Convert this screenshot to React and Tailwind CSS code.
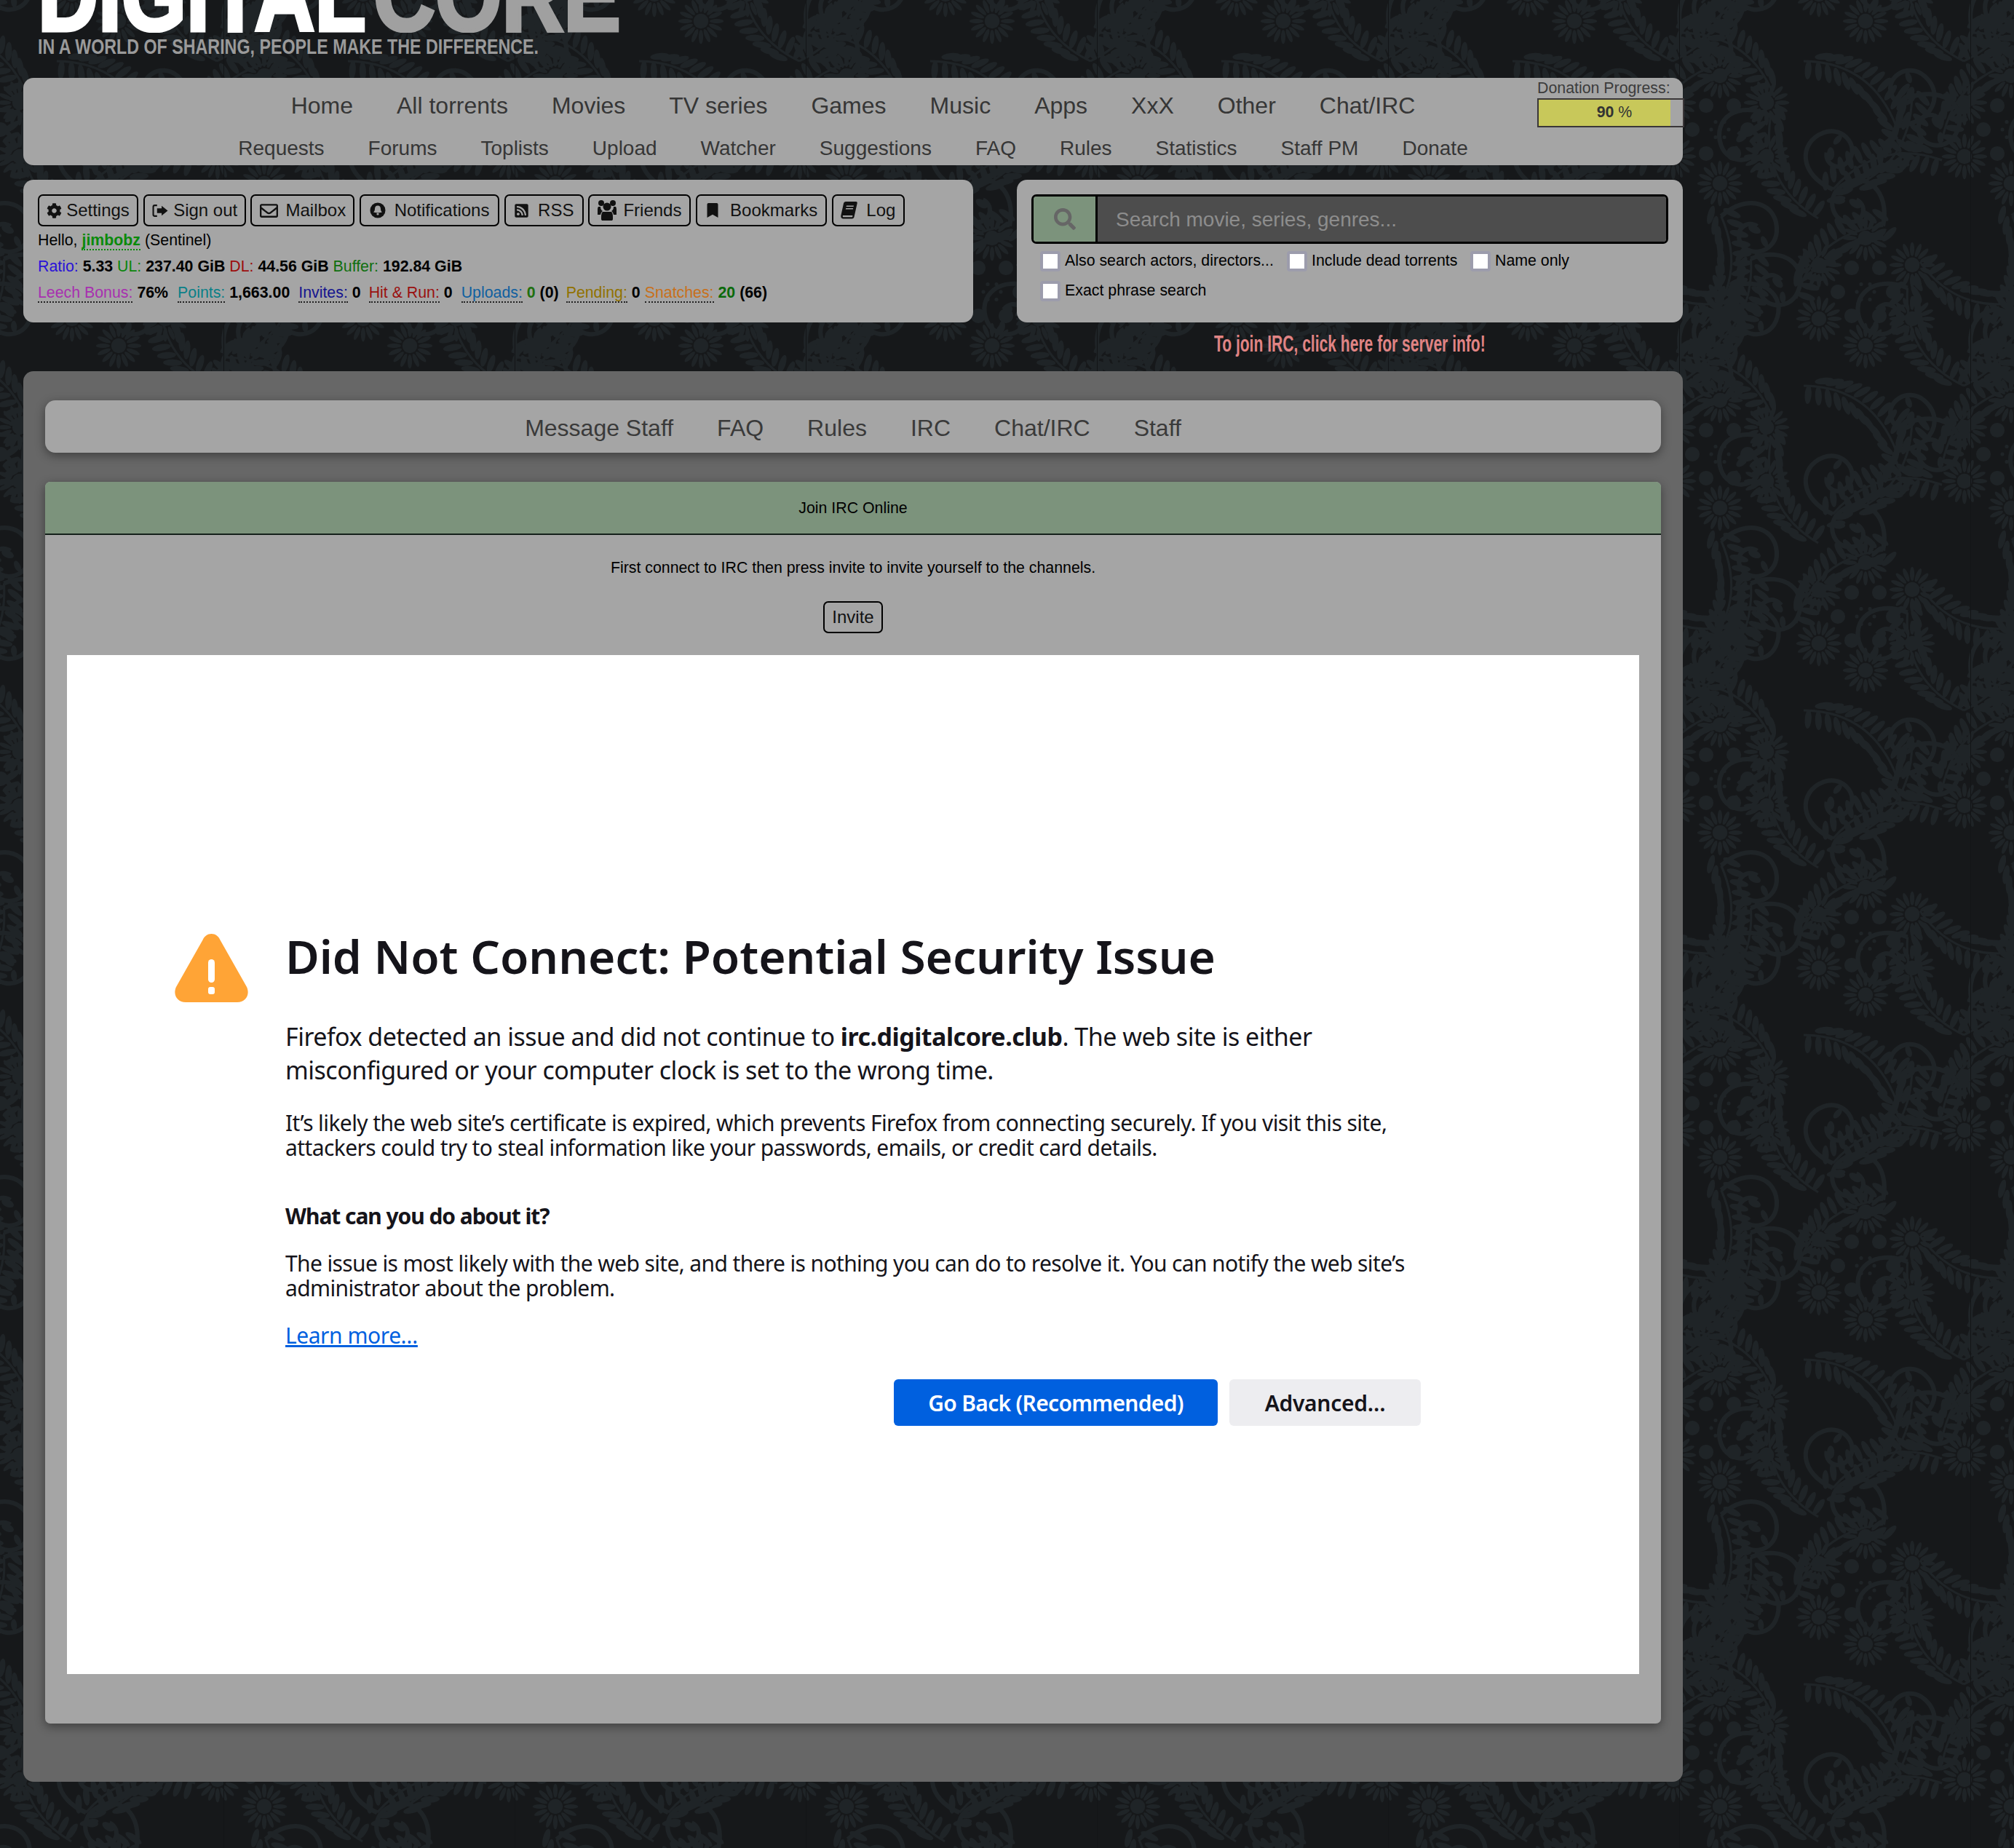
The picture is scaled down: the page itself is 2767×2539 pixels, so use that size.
import React from 'react';
import { FaCog, FaRegEnvelope, FaRssSquare, FaBookmark, FaSearch } from 'react-icons/fa';

const SANS = 'font-["Liberation_Sans",Arial,sans-serif]';

// damask background pieces
const range = (n) => Array.from({ length: n }, (_, i) => i);

const Leaf = ({ x, y, a, l = 16, w = 6 }) => (
  <ellipse cx={x} cy={y} rx={l} ry={w} transform={`rotate(${a} ${x} ${y})`} />
);

const Flower = ({ x, y, r = 30 }) => (
  <g>
    {range(16).map((i) => {
      const a = i * 22.5;
      const rad = (a * Math.PI) / 180;
      return <Leaf key={i} x={x + Math.cos(rad) * r * 0.72} y={y + Math.sin(rad) * r * 0.72} a={a} l={r * 0.32} w={r * 0.1} />;
    })}
    <circle cx={x} cy={y} r={r * 0.34} />
  </g>
);

const Cluster = ({ x, y }) => (
  <g>
    {range(6).map((i) => {
      const rad = ((i * 60 + 30) * Math.PI) / 180;
      return <Flower key={i} x={x + Math.cos(rad) * 74} y={y + Math.sin(rad) * 74} />;
    })}
    {range(6).map((i) => {
      const rad = ((i * 60) * Math.PI) / 180;
      return <circle key={i} cx={x + Math.cos(rad) * 38} cy={y + Math.sin(rad) * 38} r="10" />;
    })}
    {range(6).map((i) => {
      const rad = ((i * 60) * Math.PI) / 180;
      return <circle key={i} cx={x + Math.cos(rad) * 12} cy={y + Math.sin(rad) * 12} r="2.500" />;
    })}
  </g>
);

const Feather = ({ x, y, rot = 0, flip = 1 }) => {
  const pts = range(13).map((i) => {
    const t = i / 12;
    const px = 2 * (1 - t) * t * 70 + t * t * 40;
    const py = -2 * (1 - t) * t * 60 - t * t * 150;
    return [px, py, -90 + t * 70];
  });
  return (
    <g transform={`translate(${x} ${y}) rotate(${rot}) scale(${flip} 1)`}>
      <path d="M0 0Q70 -60 40 -150" fill="none" stroke="#1f2427" strokeWidth="3" />
      {pts.slice(1).map(([px, py, a], i) => (
        <g key={i}>
          <Leaf x={px - 14} y={py - 3} a={a - 50} l={13} w={4.500} />
          <Leaf x={px + 15} y={py - 3} a={a + 50} l={13} w={4.500} />
        </g>
      ))}
      <path d="M40 -150c40 -30 80 -10 74 28c-5 30 -46 34 -52 6c-3 -16 14 -26 26 -16" fill="none" stroke="#1f2427" strokeWidth="6" />
      <Leaf x={84} y={-128} a={30} l={9} w={5} />
      <Leaf x={96} y={-110} a={70} l={8} w={4} />
    </g>
  );
};

const TileBody = () => (
  <g>
    <Cluster x={55} y={68} />
    <Cluster x={255} y={291} />
    <Feather x={190} y={190} rot={-10} flip={-1} />
    <Feather x={230} y={150} rot={20} />
    <Feather x={160} y={300} rot={65} flip={-1} />
    <Feather x={30} y={340} rot={-5} />
    <Feather x={390} y={420} rot={-15} flip={-1} />
    <Feather x={420} y={380} rot={15} />
    <Feather x={360} y={530} rot={60} flip={-1} />
    <Feather x={-10} y={420} rot={15} />
    <Feather x={360} y={110} rot={-120} />
    <Feather x={170} y={420} rot={140} flip={-1} />
    <Feather x={330} y={250} rot={95} />
    <Feather x={130} y={470} rot={-70} />
  </g>
);

// tile content is drawn again on every side so that it wraps over the edges
const Tile = () => (
  <g fill="#1f2427">
    {[-400, 0, 400].map((dx) =>
      [-446, 0, 446].map((dy) => (
        <g key={`${dx}:${dy}`} transform={`translate(${dx} ${dy})`}>
          <TileBody />
        </g>
      ))
    )}
  </g>
);

const Background = () => (
  <svg className="absolute inset-0 w-full h-full" aria-hidden="true">
    <defs>
      <pattern id="damask" width="400" height="446" patternUnits="userSpaceOnUse" patternTransform="translate(308 110)">
        <Tile />
        <rect x="399" width="1" height="446" fill="#131517" />
      </pattern>
    </defs>
    <rect width="100%" height="100%" fill="url(#damask)" />
  </svg>
);

const SignOutIcon = () => (
  <svg width="24" height="21" viewBox="0 0 22 20" fill="currentColor">
    <path d="M7 2H4a3 3 0 0 0-3 3v10a3 3 0 0 0 3 3h3v-2H4a1 1 0 0 1-1-1V5a1 1 0 0 1 1-1h3z" />
    <path d="M13 3.500 21 10l-8 6.500V13H7V7h6z" />
  </svg>
);

const BellIcon = () => (
  <svg width="22" height="22" viewBox="0 0 22 22">
    <circle cx="11" cy="11" r="10.500" fill="currentColor" />
    <path d="M11 4.500c-2.800 0-4 2-4 4.500 0 2-.8 3.500-2 4.500 2 1 10 1 12 0-1.200-1-2-2.500-2-4.500 0-2.500-1.200-4.500-4-4.500z" fill="#a5a5a5" />
    <circle cx="11" cy="16" r="1.600" fill="#a5a5a5" />
  </svg>
);

const FriendsIcon = () => (
  <svg width="26" height="30" viewBox="0 0 26 30" fill="currentColor">
    <circle cx="5" cy="5" r="4" />
    <circle cx="21" cy="5" r="4" />
    <circle cx="13" cy="10" r="5.500" />
    <path d="M1 10h3c0 3 1 5 3 6-1.500 1-2.500 2.500-3 5H0v-7c0-2 .3-3 1-4zM25 10h-3c0 3-1 5-3 6 1.500 1 2.500 2.500 3 5h4v-7c0-2-.3-3-1-4z" />
    <path d="M7 17h12c1.500 1.500 2 4 2 7v3c0 1.500-1 2-2 2H7c-1 0-2-.5-2-2v-3c0-3 .5-5.500 2-7z" />
  </svg>
);

const BookIcon = () => (
  <svg width="23" height="26" viewBox="0 0 23 26" fill="currentColor">
    <path d="M7 1h14c1.500 0 2 1 1.700 2.200L18.500 22c-.3 1.500-1.200 2.500-3 2.500H3.500C1.500 24.500 0 23 .3 20.500L4 3.500C4.300 2 5.500 1 7 1z" />
    <path d="M3 20h13.500l-.5 2.200H3.500c-.8 0-.9-1.700-.5-2.200z" fill="#a5a5a5" />
    <path d="M8 6.500h10l-.4 1.500h-10zM7.200 10h10l-.4 1.500h-10z" fill="#a5a5a5" />
  </svg>
);

const userButtons = [
  { label: 'Settings', icon: <FaCog size={21} />, width: 'w-[138px]', gap: 'gap-[6px]' },
  { label: 'Sign out', icon: <SignOutIcon />, width: 'w-[141px]', gap: 'gap-[6px]' },
  { label: 'Mailbox', icon: <FaRegEnvelope size={25} />, width: 'w-[143px]', gap: 'gap-[11px]' },
  { label: 'Notifications', icon: <BellIcon />, width: 'w-[192px]', gap: 'gap-[12px]' },
  { label: 'RSS', icon: <FaRssSquare size={21} />, width: 'w-[109px]', gap: 'gap-[12px]' },
  { label: 'Friends', icon: <FriendsIcon />, width: 'w-[141px]', gap: 'gap-[9px]' },
  { label: 'Bookmarks', icon: <FaBookmark size={20} />, width: 'w-[180px]', gap: 'gap-[14px]' },
  { label: 'Log', icon: <BookIcon />, width: 'w-[100px]', gap: 'gap-[12px]' },
];

const Label = ({ color, children }) => (
  <span className={`${color} border-b-2 border-dotted border-[#222]`}>{children}</span>
);

const CheckOption = ({ label, className }) => (
  <label className={`flex items-center gap-[6px] text-[21.33px] text-black ${className}`}>
    <input type="checkbox" className="appearance-none w-[28px] h-[28px] bg-white border-4 border-[#9c9cac] rounded-[4px]" />
    {label}
  </label>
);

export default function App() {
  return (
    <div className={`relative min-h-[2539px] overflow-hidden bg-[#16181a] ${SANS}`}>
      <Background />
      <div className="relative w-[2280px] ml-[32px]">
        {/* Logo */}
        <div className="h-[107px] pl-[20px]">
          <div className="flex items-end h-[45px] overflow-hidden font-bold text-[140px] leading-[0.72]">
            <span className="block w-[461px] shrink-0 origin-left scale-x-[0.82] text-white [-webkit-text-stroke:5px_white]">DIGITAL</span>
            <span className="block w-[339px] shrink-0 origin-left scale-x-[0.84] text-[#a0a0a0] [-webkit-text-stroke:5px_#a0a0a0]">CORE</span>
          </div>
          <div className="mt-[5px] whitespace-nowrap origin-left scale-x-[0.775] font-bold text-[30px] leading-[28px] text-[#9a9a9a]">
            IN A WORLD OF SHARING, PEOPLE MAKE THE DIFFERENCE.
          </div>
        </div>

        {/* Main nav */}
        <div className="relative h-[120px] pt-[20px] rounded-[14px] bg-[#a5a5a5] text-[#363636]">
          <div className="flex justify-center gap-[60px] text-[32px] leading-[36px]">
            {['Home', 'All torrents', 'Movies', 'TV series', 'Games', 'Music', 'Apps', 'XxX', 'Other', 'Chat/IRC'].map((item) => (
              <a key={item}>{item}</a>
            ))}
          </div>
          <div className="flex justify-center gap-[60px] mt-[23px] text-[28px] leading-[36px]">
            {['Requests', 'Forums', 'Toplists', 'Upload', 'Watcher', 'Suggestions', 'FAQ', 'Rules', 'Statistics', 'Staff PM', 'Donate'].map((item) => (
              <a key={item}>{item}</a>
            ))}
          </div>
          {/* Donation */}
          <div className="absolute top-[2px] left-[2080px] w-[202px]">
            <div className="text-[21.33px] leading-[24px] text-[#3c3c3c] whitespace-nowrap">Donation Progress:</div>
            <div className="relative mt-[2px] h-[40px] border-2 border-[#3a3638]">
              <div className="h-full w-[181px] bg-[#c8c85a]" />
              <div className="absolute inset-0 pl-[10px] flex items-center justify-center text-[21.33px] text-[#333]">
                <span><b>90</b> %</span>
              </div>
            </div>
          </div>
        </div>

        {/* User + search panels */}
        <div className="flex justify-between mt-[20px]">
          <div className="w-[1305px] h-[196px] pt-[20px] px-[20px] rounded-[14px] bg-[#a5a5a5] text-[21.33px] leading-[36px] text-black">
            <div className="flex gap-[6.700px]">
              {userButtons.map((b) => (
                <button key={b.label} className={`flex items-center justify-center h-[44px] ${b.width} ${b.gap} border-2 border-black rounded-[7px] text-[24px] text-[#111]`}>
                  {b.icon}
                  {b.label}
                </button>
              ))}
            </div>
            <div className="mt-[1px]">
              Hello, <span className="font-bold text-[#0a8a0a] border-b-2 border-dotted border-[#0a8a0a]">jimbobz</span> (Sentinel)
            </div>
            <div>
              <span className="text-[#2a12d8]">Ratio:</span> <b>5.33</b> <span className="text-[#0b860b]">UL:</span> <b>237.40 GiB</b>{' '}
              <span className="text-[#9c0e0e]">DL:</span> <b>44.56 GiB</b> <span className="text-[#0f6f0f]">Buffer:</span> <b>192.84 GiB</b>
            </div>
            <div className="flex">
              <span className="mr-[13px]"><Label color="text-[#a830b0]">Leech Bonus:</Label> <b>76%</b></span>
              <span className="mr-[12px]"><Label color="text-[#0a8088]">Points:</Label> <b>1,663.00</b></span>
              <span className="mr-[11px]"><Label color="text-[#14148f]">Invites:</Label> <b>0</b></span>
              <span className="mr-[12px]"><Label color="text-[#9a1010]">Hit &amp; Run:</Label> <b>0</b></span>
              <span className="mr-[10px]"><Label color="text-[#1060a0]">Uploads:</Label> <b className="text-[#1f7010]">0</b> <b>(0)</b></span>
              <span className="mr-[6px]"><Label color="text-[#917200]">Pending:</Label> <b>0</b></span>
              <span><Label color="text-[#c8701a]">Snatches:</Label> <b className="text-[#0a6a0a]">20</b> <b>(66)</b></span>
            </div>
          </div>

          <div className="w-[915px]">
            <div className="h-[196px] pt-[20px] px-[20px] rounded-[14px] bg-[#a5a5a5]">
              <div className="flex h-[68px] border-[3px] border-black rounded-[7px] overflow-hidden">
                <div className="flex items-center justify-center w-[88px] bg-[#7c937c] border-r-[3px] border-black text-[#666]">
                  <FaSearch size={30} />
                </div>
                <div className="flex-1 flex items-center pl-[25px] pt-[2px] bg-[#4d4d4d] text-[28px] text-[#8d8d8d]">Search movie, series, genres...</div>
              </div>
              <div className="flex pl-[12px] mt-[10px] h-[28px]">
                <CheckOption label="Also search actors, directors..." className="w-[339px]" />
                <CheckOption label="Include dead torrents" className="w-[252px]" />
                <CheckOption label="Name only" />
              </div>
              <div className="flex pl-[12px] mt-[13px] h-[28px]">
                <CheckOption label="Exact phrase search" />
              </div>
            </div>
            <div className="h-[67px] flex items-center justify-center">
              <a className="font-bold text-[32px] text-[#e08484] whitespace-nowrap scale-x-[0.658] pb-[9px]">To join IRC, click here for server info!</a>
            </div>
          </div>
        </div>

        {/* Main panel */}
        <div className="h-[1938px] px-[30px] pt-[40px] pb-[80px] rounded-[14px] bg-[#676767]">
          <div className="flex justify-center items-center gap-[60px] h-[72px] pt-[3px] rounded-[14px] bg-[#a5a5a5] text-[32px] text-[#3a3a3a] shadow-[0_4px_14px_rgba(0,0,0,0.4)]">
            {['Message Staff', 'FAQ', 'Rules', 'IRC', 'Chat/IRC', 'Staff'].map((item) => (
              <a key={item}>{item}</a>
            ))}
          </div>

          <div className="mt-[40px] h-[1706px] rounded-[7px] overflow-hidden bg-[#a5a5a5] shadow-[0_4px_14px_rgba(0,0,0,0.4)]">
            <div className="flex items-center justify-center h-[73px] pt-[2px] bg-[#7c937c] border-b-2 border-[#14201a] text-[21.33px] text-black">Join IRC Online</div>
            <div className="pt-[30px] text-center text-[21.33px] leading-[30px] text-black">First connect to IRC then press invite to invite yourself to the channels.</div>
            <div className="flex justify-center mt-[31px]">
              <button className="w-[82px] h-[44px] border-2 border-black rounded-[7px] text-[24px] text-[#111]">Invite</button>
            </div>

            {/* Firefox error page */}
            <div className="mt-[30px] mx-[30px] h-[1400px] bg-white text-[#15141a] font-['Noto_Sans',sans-serif]">
              <div className="flex pl-[148px] pt-[380px]">
                <svg className="shrink-0 mt-[3px]" width="101" height="94" viewBox="0 0 101 94">
                  <path d="M50.500 0c-5.500 0-9.500 3-12 8.500L2 73c-5 11 2 21 13 21h71c11 0 18-10 13-21L62.500 8.500C60 3 56 0 50.500 0z" fill="#ffa436" />
                  <rect x="46" y="35" width="9" height="32" rx="4.500" fill="#fff" />
                  <rect x="46" y="73" width="9" height="10" rx="3" fill="#fff" />
                </svg>
                <div className="ml-[51px] w-[1560px]">
                  <h1 className="-mt-[1px] text-[64px] leading-[70px] font-semibold tracking-[-0.05px] whitespace-nowrap">Did Not Connect: Potential Security Issue</h1>
                  <p className="mt-[52px] text-[34px] leading-[46px] w-[1560px] tracking-[-0.51px]">
                    Firefox detected an issue and did not continue to <b>irc.digitalcore.club</b>. The web site is either misconfigured or your computer clock is set to the wrong time.
                  </p>
                  <p className="mt-[33px] text-[30px] leading-[34px] tracking-[-0.6px]">
                    It’s likely the web site’s certificate is expired, which prevents Firefox from connecting securely. If you visit this site, attackers could try to steal information like your passwords, emails, or credit card details.
                  </p>
                  <h2 className="mt-[57px] text-[30px] leading-[40px] font-bold tracking-[-1.06px]">What can you do about it?</h2>
                  <p className="mt-[28px] text-[30px] leading-[34px] tracking-[-0.63px]">
                    The issue is most likely with the web site, and there is nothing you can do to resolve it. You can notify the web site’s administrator about the problem.
                  </p>
                  <a className="block mt-[28px] text-[30px] leading-[40px] text-[#0060df] underline tracking-[-0.45px]">Learn more…</a>
                  <div className="flex justify-end gap-[16px] mt-[40px]">
                    <button className="w-[445px] h-[64px] rounded-[6px] bg-[#0060df] text-white text-[30px] font-semibold tracking-[-0.7px]">Go Back (Recommended)</button>
                    <button className="w-[263px] h-[64px] rounded-[6px] bg-[#ededf0] text-[30px] font-semibold tracking-[-0.3px]">Advanced…</button>
                  </div>
                </div>
              </div>
            </div>
          </div>
        </div>
      </div>
    </div>
  );
}
